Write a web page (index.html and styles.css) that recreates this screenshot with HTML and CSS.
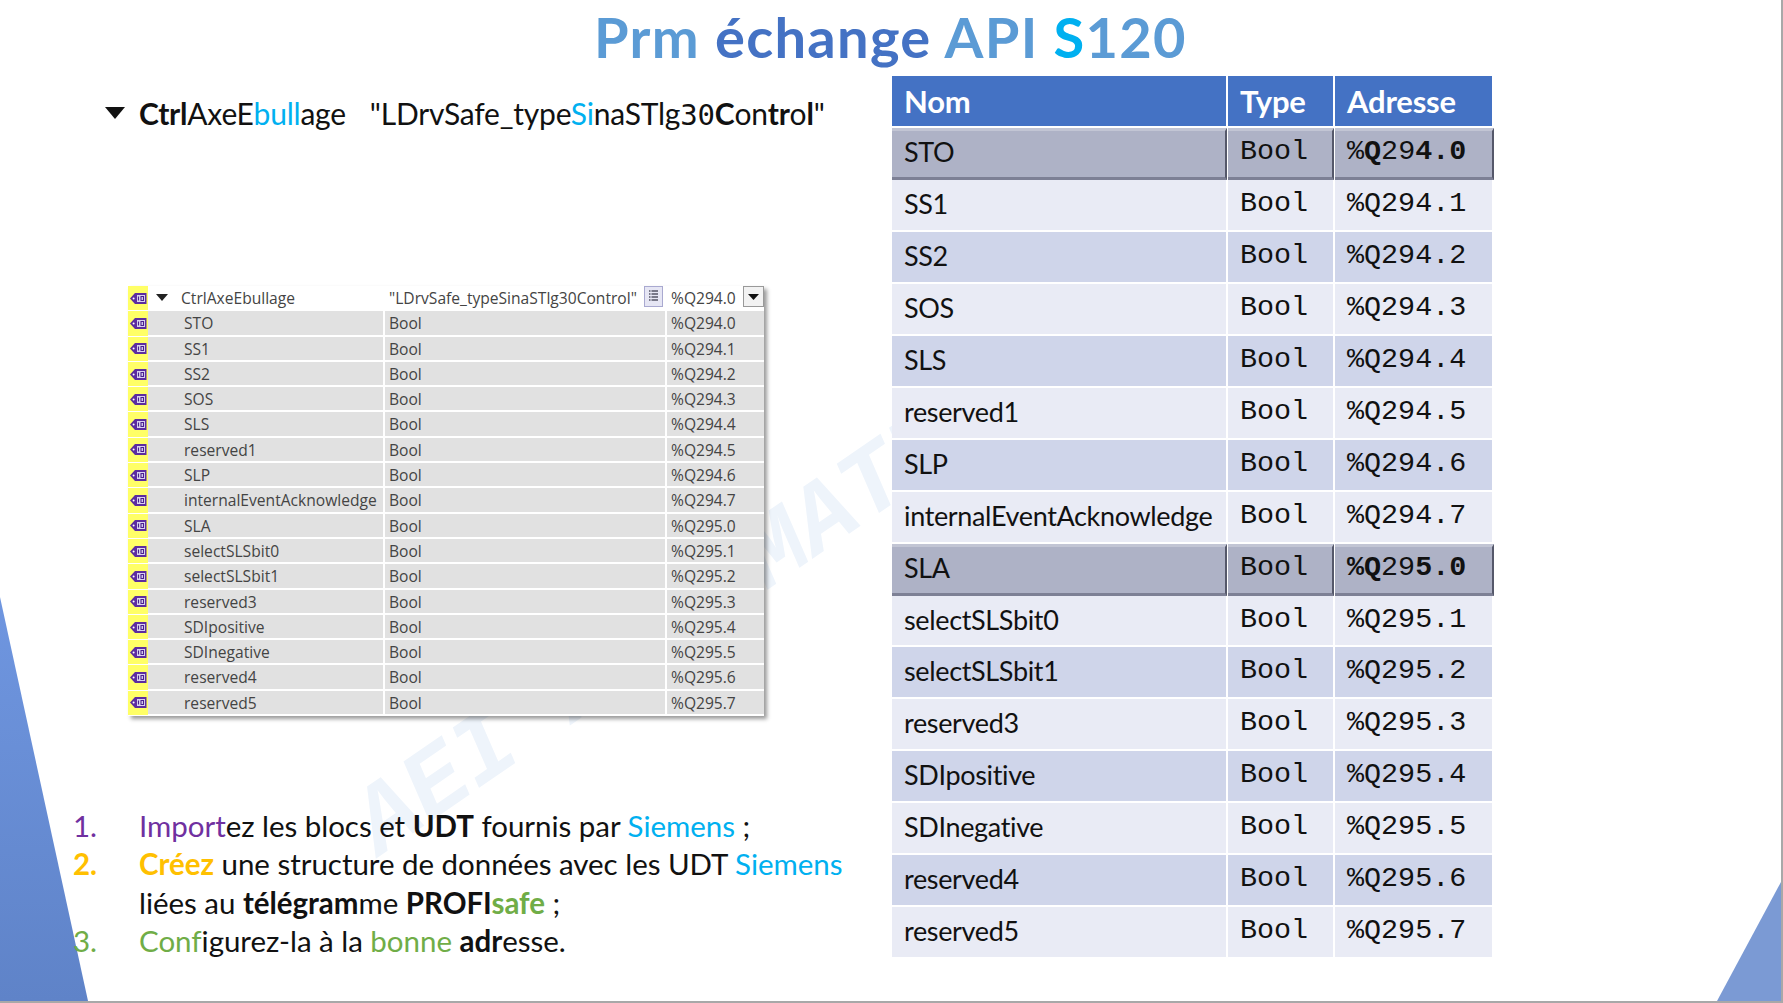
FILE: index.html
```html
<!DOCTYPE html>
<html lang="fr">
<head>
<meta charset="utf-8">
<title>Prm échange API S120</title>
<link rel="stylesheet" href="styles.css">
</head>
<body>
<div class="slide">
  <div class="tri tri-left"></div>
  <div class="tri tri-right"></div>
  <div class="watermark">AEI AUTOMATION</div>
  <h1 class="title"><span class="c-sky">Prm</span> <span class="c-blue">échange</span> <span class="c-sky">API</span> <span class="c-cyan">S</span><span class="c-sky">120</span></h1>
  <div class="columns">
    <section class="left">
      <div class="struct-head">
        <svg class="caret" viewBox="0 0 20 12"><path d="M0 0H20L10 12Z"/></svg>
        <span class="struct-name"><b>Ctrl</b>AxeE<span class="cy">bull</span>age</span>
        <span class="struct-type">"LDrvSafe_type<span class="cy">Si</span>naSTlg<span class="mono30">30</span><b>C</b>on<b>tr</b>o<b>l</b>"</span>
      </div>
      <div class="sim" id="sim"></div>
      <ol class="steps">
        <li class="step"><span class="num c1">1.</span><span><span class="c1">Import</span>ez les blocs et <b>UDT</b> fournis par <span class="cy">Siemens</span> ;</span></li>
        <li class="step"><span class="num c2"><b>2.</b></span><span><b class="c2">Créez</b> une structure de données avec les UDT <span class="cy">Siemens</span><br>liées au <b>télégram</b>me <b>PROFI</b><b class="c3">safe</b> ;</span></li>
        <li class="step"><span class="num c3">3.</span><span><span class="c3">Conf</span>igurez-la à la <span class="c3">bonne</span> <b>adr</b>esse.</span></li>
      </ol>
    </section>
    <section class="right">
      <div class="tbl" id="tbl">
        <div class="th">Nom</div><div class="th">Type</div><div class="th">Adresse</div>
      </div>
    </section>
  </div>
</div>
<script src="app.js"></script>
</body>
</html>
```
FILE: styles.css
```css
* { box-sizing: border-box; }
html, body { margin: 0; padding: 0; background: #fff; }
body { width: 1783px; height: 1003px; overflow: hidden; }
b { font-weight: 700; }
.slide {
  position: relative;
  width: 1783px; height: 1003px;
  background: #fff;
  border-right: 2px solid #a8a8a8;
  border-bottom: 2px solid #a8a8a8;
  overflow: hidden;
  font-family: Lato, "Liberation Sans", sans-serif;
  color: #111;
}
.tri { position: absolute; bottom: 0; }
.tri-left {
  left: 0; width: 88px; height: 404px;
  background: linear-gradient(180deg, #6f96e0, #5f83c8);
  clip-path: polygon(0 0, 100% 100%, 0 100%);
}
.tri-right {
  right: 0; width: 64px; height: 119px;
  background: #7b9ad4;
  clip-path: polygon(100% 0, 100% 100%, 0 100%);
}
.watermark {
  position: absolute;
  left: 408px; top: 728px;
  font: italic 700 98px "Liberation Mono", monospace;
  color: #eef4fb;
  white-space: nowrap;
  transform: rotate(-34.5deg);
  transform-origin: 60px 150px;
}
.title {
  position: relative;
  margin: 0;
  height: 76px;
  text-align: center;
  font-size: 56px;
  line-height: 73px;
  font-weight: 700;
  letter-spacing: 1.3px;
}
.c-sky { color: #5b9bd5; }
.c-blue { color: #4472c4; }
.c-cyan { color: #00b0f0; }
.columns { position: relative; display: flex; padding-left: 73px; }
.left { width: 819px; }
.struct-head {
  display: flex; align-items: center;
  height: 74px;
  padding-left: 32px;
  font-size: 30px;
  letter-spacing: -.22px;
  color: #111;
}
.caret { width: 20px; height: 12px; fill: #111; margin-right: 14px; }
.struct-name { margin-right: 24px; }
.cy { color: #00b0f0; }
.mono30 { font-family: "DejaVu Sans Mono", monospace; font-size: 29px; }
.sim {
  width: 636px;
  margin: 136px 0 0 55px;
  font-family: "Open Sans", sans-serif;
  font-size: 15.6px;
  color: #444;
  box-shadow: 3px 3px 4px rgba(0,0,0,.4);
}
.sim-row {
  display: grid;
  grid-template-columns: 20px 235px 282px 99px;
  height: 25.3px;
  line-height: 24px;
  background: #fff;
  white-space: nowrap;
}
.sim-ico { background: #ffff66; display: flex; align-items: center; justify-content: center; margin-bottom: 1px; }
.sim-ico svg { width: 17px; height: 13px; display: block; }
.sim-cell { background: #e1e1e1; margin: 0 0 2px 2px; padding-left: 4px; overflow: hidden; }
.sim-name { padding-left: 36px; margin-left: 0; }
.sim-addr { margin-right: 0; }
.sim-head .sim-cell { background: #fff; position: relative; }
.sim-head .sim-name { padding-left: 33px; }
.sim-head .sim-type { display: flex; justify-content: space-between; padding-right: 2px; }
.sim-head .sim-addr { display: flex; justify-content: space-between; }
.mini-caret { position: absolute; left: 8px; top: 8px; width: 12px; height: 7px; fill: #222; }
.mini-btn { width: 19px; height: 21px; border: 1px solid #a9a9d0; background: #e6e6f4; display: flex; align-items: center; justify-content: center; flex: none; }
.mini-btn svg { width: 11px; height: 13px; }
.drop { width: 21px; height: 21px; border: 1px solid #999; background: #f2f2f2; display: flex; align-items: center; justify-content: center; flex: none; }
.drop svg { width: 11px; height: 6px; fill: #111; }
.steps {
  list-style: none;
  margin: 91px 0 0;
  padding: 0;
  font-size: 29.5px;
  line-height: 38.4px;
  letter-spacing: -.03px;
  color: #111;
}
.step { display: flex; }
.num { width: 66px; flex: none; }
.c1 { color: #7030a0; }
.c2 { color: #ffc000; }
.c3 { color: #70ad47; }
.right { width: 600px; margin-top: 0; }
.tbl {
  display: grid;
  grid-template-columns: 336px 107px 157px;
  grid-auto-rows: 51.96px;
  width: 600px;
}
.th {
  background: #4472c4; color: #fff;
  font-weight: 700; font-size: 31px;
  letter-spacing: -.2px;
  height: 50px; line-height: 50px;
  padding-left: 12px;
  border-right: 2px solid #fff;
}
.th:nth-child(3) { border-right: 0; }
.td {
  padding-left: 12px;
  border-right: 2px solid #fff;
  border-bottom: 2px solid #fff;
  color: #111;
  white-space: nowrap;
}
.td-name { font-size: 27px; line-height: 47px; letter-spacing: -.35px; }
.td-mono { font-family: "Liberation Mono", monospace; font-size: 28.4px; line-height: 48px; padding-left: 12px; }
.td-end { border-right: 0; }
.td.odd { background: #e9ebf5; }
.td.even { background: #cfd5ea; }
.td.hl {
  background: #aeb2c6;
  margin-right: 1px;
  border-right: 2px solid #55586a;
  border-bottom: 3px solid #7d8095;
  border-top: 3px solid #c2c5d4;
  line-height: 42px;
}
.td.td-end.hl { margin-right: -2px; }
```
FILE: app.js
```js
var rows = [
  ["STO","%Q294.0"],["SS1","%Q294.1"],["SS2","%Q294.2"],["SOS","%Q294.3"],
  ["SLS","%Q294.4"],["reserved1","%Q294.5"],["SLP","%Q294.6"],
  ["internalEventAcknowledge","%Q294.7"],["SLA","%Q295.0"],["selectSLSbit0","%Q295.1"],
  ["selectSLSbit1","%Q295.2"],["reserved3","%Q295.3"],["SDIpositive","%Q295.4"],
  ["SDInegative","%Q295.5"],["reserved4","%Q295.6"],["reserved5","%Q295.7"]
];
var tag = '<svg viewBox="0 0 17 13"><path d="M0 6.5L5 1H16.5V12H5Z" fill="#5c2ca0"/><rect x="7" y="3" width="8" height="7" fill="#d9d2f0"/><path d="M8.5 4.5v4M11 4.5h2.5v4H11z" fill="none" stroke="#4a1f90" stroke-width="1.1"/><circle cx="3.6" cy="6.5" r="1" fill="#fff"/></svg>';
var sim = document.getElementById("sim");
var h = '<div class="sim-row sim-head"><div class="sim-ico">' + tag + '</div>' +
  '<div class="sim-cell sim-name"><svg class="mini-caret" viewBox="0 0 12 7"><path d="M0 0H12L6 7Z"/></svg>CtrlAxeEbullage</div>' +
  '<div class="sim-cell sim-type">"LDrvSafe_typeSinaSTlg30Control"<span class="mini-btn"><svg viewBox="0 0 11 13"><path d="M1 1H10M1 4H10M1 7H10M1 10H10" stroke="#556" stroke-width="1.4" stroke-dasharray="1.5 1 7"/></svg></span></div>' +
  '<div class="sim-cell sim-addr">%Q294.0<span class="drop"><svg viewBox="0 0 11 6"><path d="M0 0H11L5.5 6Z"/></svg></span></div></div>';
rows.forEach(function (r) {
  h += '<div class="sim-row"><div class="sim-ico">' + tag + '</div><div class="sim-cell sim-name">' + r[0] +
    '</div><div class="sim-cell sim-type">Bool</div><div class="sim-cell sim-addr">' + r[1] + '</div></div>';
});
sim.innerHTML = h;
var t = "";
rows.forEach(function (r, i) {
  var cls = r[0] === "STO" || r[0] === "SLA" ? "hl" : (i % 2 ? "odd" : "even");
  var a = r[1];
  if (r[0] === "STO") a = "%<b>Q</b>29<b>4.0</b>";
  if (r[0] === "SLA") a = "<b>%Q</b>29<b>5.0</b>";
  t += '<div class="td td-name ' + cls + '">' + r[0] + '</div><div class="td td-mono ' + cls + '">Bool</div><div class="td td-mono td-end ' + cls + '">' + a + '</div>';
});
document.getElementById("tbl").insertAdjacentHTML("beforeend", t);
```
